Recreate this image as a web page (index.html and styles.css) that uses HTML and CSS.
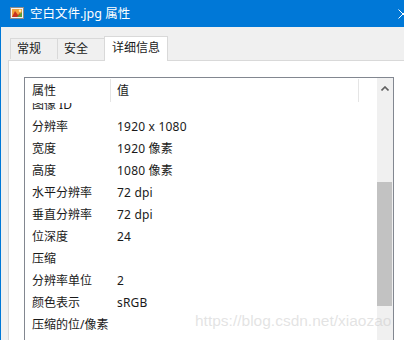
FILE: index.html
```html
<!DOCTYPE html>
<html lang="zh">
<head>
<meta charset="utf-8">
<link rel="stylesheet" href="styles.css">
</head>
<body>
<div class="window">
  <div class="titlebar">
    <svg class="app-icon" width="14" height="14" viewBox="0 0 14 14">
      <rect x="0.5" y="1.5" width="13" height="11" fill="#f4f4f4" stroke="#8a8a8a"/>
      <rect x="2" y="3" width="10" height="8" fill="#f2a33a"/>
      <path d="M2 11 L5 5 L8 9 L10 7 L12 11 Z" fill="#c8321e"/>
      <path d="M7 11 L12 6 L12 11 Z" fill="#5aa03c"/>
      <circle cx="10" cy="4.8" r="1.2" fill="#fff2b0"/>
    </svg>
    <span class="title">空白文件.jpg 属性</span>
    <svg class="close" width="10" height="10" viewBox="0 0 10 10">
      <path d="M0.5 0.5 L9.5 9.5 M9.5 0.5 L0.5 9.5" stroke="#fff" stroke-width="1"/>
    </svg>
  </div>
  <div class="tabs">
    <div class="tab tab-first">常规</div>
    <div class="tab">安全</div>
    <div class="tab tab-active">详细信息</div>
  </div>
  <div class="panel">
    <div class="listview">
      <div class="list-main">
        <div class="header">
          <div class="hcell hcell-name">属性</div>
          <div class="hcell hcell-value">值</div>
          <div class="hcell hcell-rest"></div>
        </div>
        <div class="body">
          <div class="rows">
            <div class="row"><span class="c-name">图像 ID</span><span class="c-value"></span></div>
            <div class="row"><span class="c-name">分辨率</span><span class="c-value">1920 x 1080</span></div>
            <div class="row"><span class="c-name">宽度</span><span class="c-value">1920 像素</span></div>
            <div class="row"><span class="c-name">高度</span><span class="c-value">1080 像素</span></div>
            <div class="row"><span class="c-name">水平分辨率</span><span class="c-value">72 dpi</span></div>
            <div class="row"><span class="c-name">垂直分辨率</span><span class="c-value">72 dpi</span></div>
            <div class="row"><span class="c-name">位深度</span><span class="c-value">24</span></div>
            <div class="row"><span class="c-name">压缩</span><span class="c-value"></span></div>
            <div class="row"><span class="c-name">分辨率单位</span><span class="c-value">2</span></div>
            <div class="row"><span class="c-name">颜色表示</span><span class="c-value">sRGB</span></div>
            <div class="row"><span class="c-name">压缩的位/像素</span><span class="c-value"></span></div>
            <div class="row"><span class="c-name"></span><span class="c-value"></span></div>
          </div>
        </div>
      </div>
      <div class="scrollbar">
        <div class="sb-btn">
          <svg width="8" height="5" viewBox="0 0 8 5"><path d="M0.5 4.5 L4 1 L7.5 4.5" fill="none" stroke="#606060" stroke-width="1.6"/></svg>
        </div>
        <div class="sb-gap"></div>
        <div class="sb-thumb"></div>
        <div class="sb-rest"></div>
      </div>
    </div>
  </div>
  <div class="watermark"><span>https://blog.csdn.net/xiaozao</span></div>
</div>
</body>
</html>
```
FILE: styles.css
```css
html, body {
  margin: 0;
  padding: 0;
  width: 404px;
  height: 340px;
  overflow: hidden;
  background: #f0f0f0;
}

.window {
  position: relative;
  width: 404px;
  height: 340px;
  box-sizing: border-box;
  border-left: 1px solid #0078d7;
  background: #f0f0f0;
  display: flex;
  flex-direction: column;
  font-family: "Noto Sans", "Noto Sans CJK SC", sans-serif;
  font-size: 12px;
  color: #1a1a1a;
  overflow: hidden;
}

.titlebar {
  height: 27px;
  flex: 0 0 27px;
  background: #0078d7;
  margin-left: -1px;
  display: flex;
  align-items: center;
  padding-left: 10px;
  color: #fff;
}

.app-icon {
  flex: 0 0 auto;
  margin-top: -1px;
}

.title {
  margin-left: 6px;
  font-size: 12.5px;
  line-height: 16px;
  flex: 1;
}

.close {
  margin-right: -4px;
}

.tabs {
  display: flex;
  align-items: flex-end;
  height: 24px;
  flex: 0 0 24px;
  margin-top: 9px;
  padding-left: 9px;
  position: relative;
  z-index: 1;
}

.tab {
  height: 21px;
  box-sizing: border-box;
  border-top: 1px solid #d9d9d9;
  border-right: 1px solid #d9d9d9;
  background: #f0f0f0;
  line-height: 20px;
  padding-left: 6px;
  width: 47px;
  margin-bottom: 1px;
}

.tab-first {
  border-left: 1px solid #d9d9d9;
  width: 48px;
}

.tab-active {
  height: 25px;
  width: 64px;
  margin-left: -1px;
  margin-bottom: -1px;
  border-left: 1px solid #d9d9d9;
  background: #fff;
  line-height: 22px;
  padding-left: 7px;
}

.panel {
  flex: 1;
  background: #fff;
  border-top: 1px solid #d9d9d9;
  border-left: 1px solid #d9d9d9;
  margin-left: 7px;
  padding: 16px 0 0 15px;
  display: flex;
  min-height: 0;
}

.listview {
  width: 370px;
  box-sizing: border-box;
  border: 1px solid #828790;
  border-bottom: none;
  display: flex;
  background: #fff;
}

.list-main {
  flex: 1;
  display: flex;
  flex-direction: column;
  min-width: 0;
}

.header {
  height: 25px;
  flex: 0 0 25px;
  display: flex;
  align-items: stretch;
}

.hcell {
  box-sizing: border-box;
  padding-left: 7px;
  border-right: 1px solid #e5e5e5;
  margin: 1px 0 1px 0;
  line-height: 24px;
}

.hcell-name {
  width: 86px;
}

.hcell-value {
  width: 248px;
  padding-left: 6px;
}

.hcell-rest {
  flex: 1;
  border-right: none;
}

.body {
  flex: 1;
  overflow: hidden;
  min-height: 0;
}

.rows {
  margin-top: -9px;
}

.row {
  height: 22px;
  line-height: 22px;
  display: flex;
  white-space: nowrap;
}

.c-name {
  width: 85px;
  padding-left: 7px;
  box-sizing: border-box;
}

.c-value {
  padding-left: 7px;
  letter-spacing: 0.2px;
}

.scrollbar {
  width: 16px;
  flex: 0 0 16px;
  background: #f0f0f0;
  display: flex;
  flex-direction: column;
}

.sb-btn {
  height: 20px;
  flex: 0 0 20px;
  display: flex;
  align-items: center;
  justify-content: center;
  padding-right: 1px;
}

.sb-gap {
  height: 84px;
  flex: 0 0 84px;
}

.sb-thumb {
  height: 124px;
  flex: 0 0 124px;
  background: #c2c2c2;
  margin-right: 1px;
}

.sb-rest {
  flex: 1;
}

.watermark {
  position: absolute;
  left: 194px;
  top: 310px;
  width: 199px;
  height: 22px;
  overflow: hidden;
  white-space: nowrap;
  font-family: "Liberation Sans", Arial, sans-serif;
  font-size: 15.5px;
  line-height: 22px;
  color: rgba(200, 200, 200, 0.5);
}
```
